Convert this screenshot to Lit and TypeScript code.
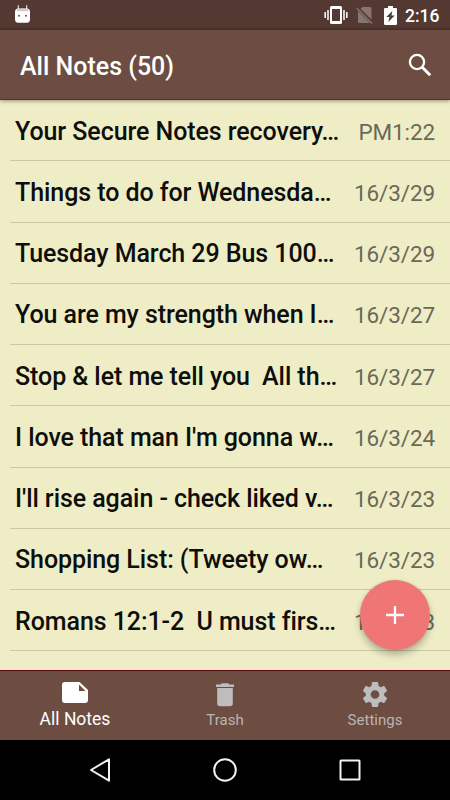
import { LitElement, html, css } from "lit";
import { customElement } from "lit/decorators.js";

interface Note {
  title: string;
  date: string;
}

const NOTES: Note[] = [
  { title: "Your Secure Notes recovery…", date: "PM1:22" },
  { title: "Things to do for Wednesda…", date: "16/3/29" },
  { title: "Tuesday March 29 Bus 100…", date: "16/3/29" },
  { title: "You are my strength when I…", date: "16/3/27" },
  { title: "Stop & let me tell you  All th…", date: "16/3/27" },
  { title: "I love that man I'm gonna w…", date: "16/3/24" },
  { title: "I'll rise again - check liked v…", date: "16/3/23" },
  { title: "Shopping List: (Tweety ow…", date: "16/3/23" },
  { title: "Romans 12:1-2  U must firs…", date: "16/3/23" },
];

@customElement("status-bar")
class StatusBar extends LitElement {
  static styles = css`
    :host {
      display: flex;
      align-items: center;
      height: 30px;
      flex: none;
      box-sizing: border-box;
      padding: 0 9px 0 14px;
      background: linear-gradient(#533932 27px, #49312b 30px);
      color: #fff;
    }
    svg { display: block; flex: none; }
    .robot { margin-top: -3px; }
    .spacer { flex: 1; }
    .vibrate { margin-right: 8px; }
    .sim { margin-right: 11px; }
    .battery { margin-right: 8px; }
    .time { font-size: 17.5px; font-weight: 500; line-height: 30px; padding-top: 2px; width: 36px; white-space: nowrap; }
  `;
  render() {
    return html`
      <svg class="robot" width="17" height="20" viewBox="0 0 17 20">
        <path d="M4.300 1.500v4M12.700 1.500v4" stroke="#e9e4e3" stroke-width="1.100" stroke-linecap="round" />
        <path d="M1 8Q1 4.500 4 4.500H13Q16 4.500 16 8V15Q16 18.800 13 18.800H4Q1 18.800 1 15Z" fill="#fff" />
        <path d="M2.500 5.200Q8.500 4 14.500 5.200L14 7.300H3Z" fill="#d4cbc9" />
        <circle cx="5" cy="11.800" r="1" fill="#6b5650" /><circle cx="12" cy="11.800" r="1" fill="#6b5650" />
      </svg>
      <span class="spacer"></span>
      <svg class="vibrate" width="24" height="20" viewBox="0 0 24 20">
        <path d="M7.500 1H16.500Q18 1 18 2.500V17.500Q18 19 16.500 19H7.500Q6 19 6 17.500V2.500Q6 1 7.500 1ZM8 4V16H16V4Z" fill="#fff" fill-rule="evenodd" />
        <path d="M1.200 7V13M4 5V15M20 5V15M22.800 7V13" stroke="#fff" stroke-width="1.500" />
      </svg>
      <svg class="sim" width="17" height="18" viewBox="0 0 17 18">
        <path d="M6.500 1H14Q15.500 1 15.500 2.500V13.500L4.500 2.700ZM2 5L14 17H3.500Q2 17 2 15.500Z" fill="#87756f" />
        <path d="M.7 2L16 17.500" stroke="#87756f" stroke-width="1.300" />
      </svg>
      <svg class="battery" width="13" height="19" viewBox="0 0 13 19">
        <path d="M4 0H9V2H11.700Q13 2 13 3.300V17.700Q13 19 11.700 19H1.300Q0 19 0 17.700V3.300Q0 2 1.300 2H4ZM8.300 5L2.300 11H5.500L4.300 16L10.700 9.500H7.500Z" fill="#fff" fill-rule="evenodd" />
      </svg>
      <span class="time">2:16</span>
    `;
  }
}

@customElement("title-bar")
class TitleBar extends LitElement {
  static styles = css`
    :host {
      display: flex;
      align-items: center;
      justify-content: space-between;
      flex: none;
      height: 70px;
      box-sizing: border-box;
      padding: 4px 18px 0 20px;
      background: #6d4d42;
      border-bottom: 1px solid #572f24;
      color: #fff;
      position: relative;
      z-index: 1;
      box-shadow: 0 1px 4px rgba(0, 0, 0, 0.4);
    }
    h1 { margin: 0; font-size: 25px; font-weight: 500; line-height: 30px; }
    svg { display: block; margin-top: -4px; }
  `;
  render() {
    return html`
      <h1>All Notes (50)</h1>
      <svg width="24" height="24" viewBox="0 0 24 24">
        <circle cx="9" cy="9" r="7.100" fill="none" stroke="#fff" stroke-width="2.300" />
        <path d="M14 14L22.200 22.200" stroke="#fff" stroke-width="2.900" />
      </svg>
    `;
  }
}

@customElement("note-row")
class NoteRow extends LitElement {
  static properties = { note: { attribute: false } };
  declare note: Note;
  static styles = css`
    :host {
      display: flex;
      justify-content: space-between;
      align-items: baseline;
      box-sizing: border-box;
      height: 61.25px;
      margin-left: 10px;
      padding: 16.6px 15px 0 5px;
      border-bottom: 1px solid #cac8a8;
      white-space: pre;
    }
    .title { font-size: 25px; font-weight: 500; color: #0e0e0c; line-height: 30px; letter-spacing: -0.07px; }
    .date { font-size: 22.5px; color: #6a6959; line-height: 30px; letter-spacing: -0.1px; }
  `;
  render() {
    return html`<span class="title">${this.note.title}</span><span class="date">${this.note.date}</span>`;
  }
}

@customElement("tab-bar")
class TabBar extends LitElement {
  static styles = css`
    :host {
      display: grid;
      grid-template-columns: repeat(3, 1fr);
      flex: none;
      height: 70px;
      box-sizing: border-box;
      background: #6d4d42;
      border-top: 1px solid #570a14;
      position: relative;
    }
    .tab { display: flex; flex-direction: column; align-items: center; color: #b9b4b2; font-size: 15px; }
    .tab.active { color: #fff; font-size: 17.5px; }
    .icon { height: 26px; padding-top: 10px; display: flex; justify-content: center; }
    svg { display: block; fill: currentColor; }
    .muted { fill: #bdbdbd; }
    .label { line-height: 24px; padding-top: 1px; }
    .active .label { padding-top: 0; }
  `;
  render() {
    return html`
      <div class="tab active">
        <div class="icon">
          <svg width="26" height="22" viewBox="0 0 26 22">
            <path d="M3 1H17.500L26 9V19Q26 22 23 22H3Q0 22 0 19V4Q0 1 3 1ZM17 3.500V10H23.500Z" fill-rule="evenodd" />
          </svg>
        </div>
        <span class="label">All Notes</span>
      </div>
      <div class="tab">
        <div class="icon">
          <svg class="muted" width="18" height="26" viewBox="0 0 18 26">
            <path d="M0 3.500H4.500L6 2.300H12L13.500 3.500H18V6H0ZM1.200 7H16.800V22.500Q16.800 25.300 13.800 25.300H4.200Q1.200 25.300 1.200 22.500Z" />
          </svg>
        </div>
        <span class="label">Trash</span>
      </div>
      <div class="tab">
        <div class="icon">
          <svg class="muted" width="26" height="27" viewBox="1.500 1.100 21 21.800">
            <path d="M19.430 12.980c.04-.32.07-.64.07-.98s-.03-.66-.07-.98l2.110-1.650c.19-.15.24-.42.12-.64l-2-3.460c-.12-.22-.39-.3-.61-.22l-2.490 1c-.52-.4-1.080-.73-1.690-.98l-.38-2.650C14.460 2.180 14.250 2 14 2h-4c-.25 0-.46.18-.49.42l-.38 2.650c-.61.25-1.170.59-1.690.98l-2.490-1c-.23-.09-.49 0-.61.22l-2 3.460c-.13.22-.07.49.12.64l2.110 1.650c-.04.32-.07.65-.07.98s.03.66.07.98l-2.110 1.650c-.19.15-.24.42-.12.64l2 3.460c.12.22.39.3.61.22l2.490-1c.52.4 1.080.73 1.690.98l.38 2.650c.03.24.24.42.49.42h4c.25 0 .46-.18.49-.42l.38-2.650c.61-.25 1.170-.59 1.690-.98l2.490 1c.23.09.49 0 .61-.22l2-3.460c.12-.22.07-.49-.12-.64l-2.110-1.650zM12 15.500c-1.930 0-3.500-1.570-3.500-3.500s1.570-3.500 3.500-3.500 3.500 1.570 3.500 3.500-1.570 3.500-3.500 3.500z" />
          </svg>
        </div>
        <span class="label">Settings</span>
      </div>
    `;
  }
}

@customElement("system-nav")
class SystemNav extends LitElement {
  static styles = css`
    :host {
      display: flex;
      justify-content: center;
      align-items: center;
      gap: 101px;
      height: 60px;
      flex: none;
      background: #000;
    }
    svg { display: block; fill: none; stroke: #f2f2f2; stroke-width: 2; stroke-linejoin: round; }
  `;
  render() {
    return html`
      <svg width="24" height="24" viewBox="0 0 24 24"><path d="M21 1.300V22.700L3 12Z" /></svg>
      <svg width="24" height="24" viewBox="0 0 24 24"><circle cx="12" cy="12" r="10.800" /></svg>
      <svg width="24" height="24" viewBox="0 0 24 24"><rect x="2.500" y="2.500" width="19" height="19" rx=".5" /></svg>
    `;
  }
}

@customElement("app-root")
class AppRoot extends LitElement {
  static styles = css`
    :host {
      display: flex;
      flex-direction: column;
      width: 450px;
      height: 800px;
      overflow: hidden;
      font-family: Roboto, "Noto Sans", sans-serif;
      background: #efedc5;
    }
    .list { flex: 1; min-height: 0; position: relative; overflow: hidden; }
    .fab {
      position: absolute;
      right: 20px;
      bottom: 20px;
      width: 70px;
      height: 70px;
      border-radius: 50%;
      background: #f07575;
      box-shadow: 0 5px 7px rgba(0, 0, 0, 0.25), 0 0 3px rgba(0, 0, 0, 0.12);
      display: flex;
      align-items: center;
      justify-content: center;
    }
    .fab svg { display: block; }
  `;
  render() {
    return html`
      <status-bar></status-bar>
      <title-bar></title-bar>
      <div class="list">
        ${NOTES.map((n) => html`<note-row .note=${n}></note-row>`)}
        <div class="fab">
          <svg width="18" height="18" viewBox="0 0 18 18">
            <path d="M9 0V18M0 9H18" stroke="#fff" stroke-width="2.300" />
          </svg>
        </div>
      </div>
      <tab-bar></tab-bar>
      <system-nav></system-nav>
    `;
  }
}
